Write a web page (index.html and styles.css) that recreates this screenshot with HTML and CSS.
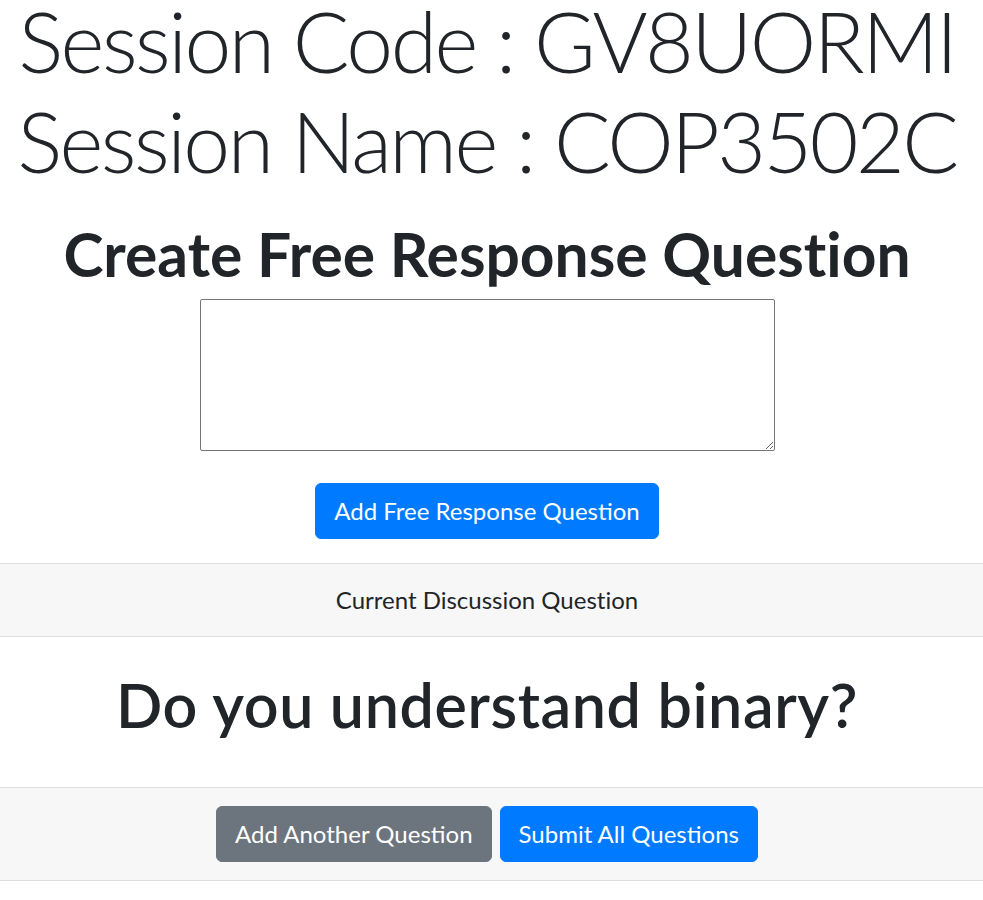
FILE: index.html
```html
<!DOCTYPE html>
<html lang="en">
<head>
<meta charset="utf-8">
<title>Session</title>
<link rel="stylesheet" href="styles.css">
</head>
<body>
<div class="page">
  <h1 class="display first">Session Code : GV8UORMI</h1>
  <h1 class="display">Session Name : COP3502C</h1>
  <h1 class="create-title">Create Free Response Question</h1>
  <textarea class="question-input"></textarea>
  <div class="action-row">
    <button class="btn btn-primary">Add Free Response Question</button>
  </div>
  <div class="card">
    <div class="card-header">Current Discussion Question</div>
    <div class="card-body">
      <h1 class="question-title">Do you understand binary?</h1>
    </div>
    <div class="card-footer">
      <button class="btn btn-secondary">Add Another Question</button>
      <button class="btn btn-primary">Submit All Questions</button>
    </div>
  </div>
</div>
</body>
</html>
```
FILE: styles.css
```css
html, body {
  margin: 0;
  padding: 0;
  background: #ffffff;
}
body {
  font-family: "Lato", "Open Sans", "Liberation Sans", sans-serif;
  font-variant-ligatures: none;
  color: #212529;
  text-align: center;
}
.page {
  display: flex;
  flex-direction: column;
  align-items: center;
  padding-right: 9px;
}
.display {
  margin: 0;
  font-size: 84px;
  font-weight: 300;
  line-height: 100.8px;
  letter-spacing: -2.5px;
  white-space: nowrap;
}
.display.first {
  line-height: 81px;
  margin-bottom: 10px;
}
.create-title {
  margin: 26px 0 9px;
  font-size: 60.5px;
  font-weight: 700;
  line-height: 72px;
  white-space: nowrap;
}
.question-input {
  box-sizing: border-box;
  width: 575px;
  height: 152px;
  margin: 0;
  border: 1px solid #767676;
  border-radius: 2px;
  padding: 3px;
  font-family: inherit;
}
.action-row {
  margin-top: 32px;
  margin-bottom: 24px;
}
.btn {
  box-sizing: border-box;
  height: 56px;
  font-family: inherit;
  font-size: 24px;
  line-height: 36px;
  font-weight: 400;
  padding: 9px 18px;
  border: 1px solid transparent;
  border-radius: 6px;
  color: #ffffff;
  cursor: pointer;
}
.btn-primary {
  background: #007bff;
  border-color: #007bff;
}
.btn-secondary {
  background: #6c757d;
  border-color: #6c757d;
}
.card {
  align-self: stretch;
  margin-right: -9px;
  padding-right: 9px;
  border-top: 1px solid #dfdfdf;
  border-bottom: 1px solid #dfdfdf;
}
.card-header {
  margin-right: -9px;
  padding: 18px 39px 18px 30px;
  font-size: 24px;
  line-height: 36px;
  background: #f7f7f7;
  border-bottom: 1px solid #dfdfdf;
}
.card-body {
  padding: 32px 30px 46px;
}
.question-title {
  margin: 0;
  font-size: 61px;
  font-weight: 600;
  line-height: 72px;
  letter-spacing: 0.6px;
  white-space: nowrap;
}
.card-footer {
  display: flex;
  justify-content: center;
  gap: 8px;
  margin-right: -9px;
  padding: 18px 39px 18px 30px;
  background: #f7f7f7;
  border-top: 1px solid #dfdfdf;
}
```
